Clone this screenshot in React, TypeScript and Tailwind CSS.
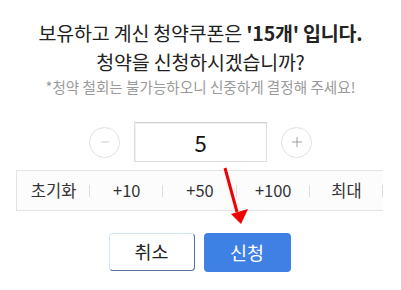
import { Minus, Plus } from 'lucide-react';

const quickItems = ['초기화', '+10', '+50', '+100', '최대'];

export default function App() {
  return (
    <div
      className="relative w-[401px] h-[290px] bg-white text-[#222] overflow-hidden"
      style={{ fontFamily: '"Noto Sans CJK KR", "Noto Sans", sans-serif' }}
    >
      <div className="flex flex-col items-center pt-[18px]">
        <p className="text-[19.5px] leading-[29px] tracking-[-0.2px] whitespace-nowrap">
          보유하고 계신 청약쿠폰은 <b className="font-bold">'15개' 입니다.</b>
        </p>
        <p className="text-[19.5px] leading-[29px] tracking-[-0.2px] whitespace-nowrap">청약을 신청하시겠습니까?</p>
        <p className="mt-[1px] text-[14.6px] leading-[20px] text-[#9a9a9a] whitespace-nowrap">
          *청약 철회는 불가능하오니 신중하게 결정해 주세요!
        </p>
      </div>

      {/* stepper */}
      <div className="mt-[25px] flex items-center justify-center gap-[14px]">
        <button className="w-[31px] h-[31px] rounded-full border border-[#e2e2e2] flex items-center justify-center text-[#aaa]">
          <Minus size={12} strokeWidth={1.2} />
        </button>
        <div className="w-[133px] h-[40px] border border-[#dedede] border-t-[#cfcfcf] shadow-[inset_1px_1px_0_#f0f0f0] flex items-center justify-center text-[22px] text-[#111]">
          5
        </div>
        <button className="w-[31px] h-[31px] rounded-full border border-[#e2e2e2] flex items-center justify-center text-[#888]">
          <Plus size={16} strokeWidth={1.2} />
        </button>
      </div>

      {/* quick buttons */}
      <div className="mt-[8px] ml-[16px] w-[367px] h-[41px] grid grid-cols-5 border-t border-b border-l border-[#e3e3e3] bg-[#fcfcfc]">
        {quickItems.map((item) => (
          <div key={item} className="relative flex items-center justify-center text-[16.5px] text-[#333]">
            {item}
            <span className="absolute right-0 top-[14px] h-[12px] w-px bg-[#dcdcdc]" />
          </div>
        ))}
      </div>

      {/* actions */}
      <div className="mt-[22px] flex justify-center gap-[9px] pr-[2px]">
        <button className="w-[86px] h-[38px] rounded-[4px] border border-[#cfe9f7] border-r-[#52709a] border-b-[#52709a] bg-white text-[18.5px] text-[#222]">
          취소
        </button>
        <button className="w-[87px] h-[39px] rounded-[4px] bg-[#3f80e4] text-[18.5px] text-white">
          신청
        </button>
      </div>

      {/* red annotation arrow */}
      <svg className="absolute left-0 top-0 pointer-events-none" width="401" height="290">
        <line x1="225" y1="168" x2="237" y2="212" stroke="#f00000" strokeWidth="3" />
        <polygon points="231,214 248,209 241,224" fill="#f00000" />
      </svg>
    </div>
  );
}
